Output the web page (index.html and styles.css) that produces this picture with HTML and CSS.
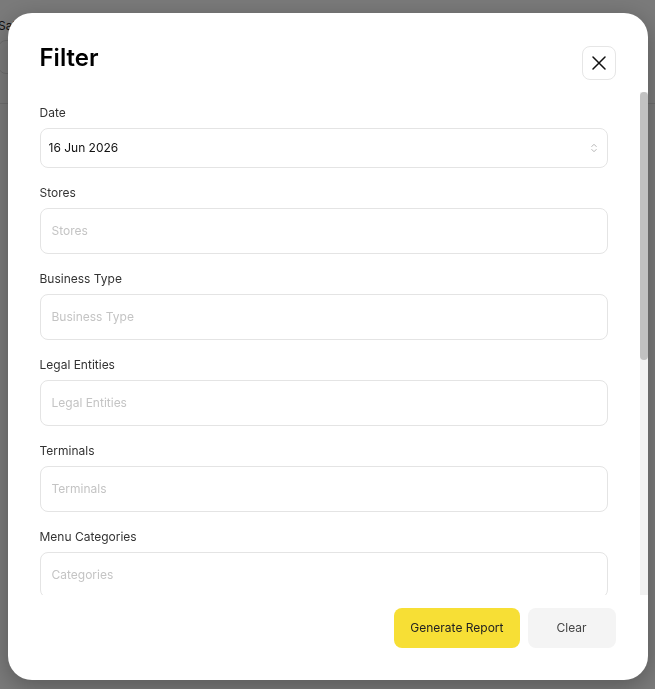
FILE: index.html
```html
<!DOCTYPE html>
<html lang="en">
<head>
<meta charset="utf-8">
<title>Filter</title>
<link rel="stylesheet" href="styles.css">
</head>
<body>
<div class="page">
  <div class="page-head">
    <div class="page-title">Sales Summary</div>
    <div class="page-box"></div>
  </div>
</div>

<div class="overlay">
  <div class="modal">
    <div class="modal-head">
      <h2 class="modal-title">Filter</h2>
      <button class="close-btn" aria-label="Close">
        <svg width="14" height="14" viewBox="0 0 14 14"><path d="M1 1 L13 13 M13 1 L1 13" stroke="#111" stroke-width="1.5" fill="none" stroke-linecap="round"/></svg>
      </button>
    </div>

    <div class="modal-body">
      <div class="scroll-content">
        <div class="field">
          <label class="label">Date</label>
          <div class="control control-date">
            <span class="value">16 Jun 2026</span>
            <svg class="chev" width="8" height="12" viewBox="0 0 8 12"><path d="M1.5 4.8 L4 2.3 L6.5 4.8 M1.5 7.2 L4 9.7 L6.5 7.2" stroke="#b5b5b5" stroke-width="1" fill="none"/></svg>
          </div>
        </div>
        <div class="field">
          <label class="label">Stores</label>
          <input class="control" placeholder="Stores">
        </div>
        <div class="field">
          <label class="label">Business Type</label>
          <input class="control" placeholder="Business Type">
        </div>
        <div class="field">
          <label class="label">Legal Entities</label>
          <input class="control" placeholder="Legal Entities">
        </div>
        <div class="field">
          <label class="label">Terminals</label>
          <input class="control" placeholder="Terminals">
        </div>
        <div class="field">
          <label class="label">Menu Categories</label>
          <input class="control" placeholder="Categories">
        </div>
        <div class="field">
          <label class="label">Menu Items</label>
          <input class="control" placeholder="Menu Items">
        </div>
      </div>
      <div class="scrollbar"><div class="thumb"></div></div>
    </div>

    <div class="modal-foot">
      <button class="btn btn-primary">Generate Report</button>
      <button class="btn btn-secondary">Clear</button>
    </div>
  </div>
</div>
</body>
</html>
```

FILE: styles.css
```css
* { box-sizing: border-box; }

html, body {
  margin: 0;
  padding: 0;
  height: 100%;
}

body {
  font-family: Inter, "Noto Sans", "Liberation Sans", sans-serif;
  background: #f4f4f4;
  color: #222;
  overflow: hidden;
}

.page {
  height: 100%;
}

.page-head {
  height: 104px;
  border-bottom: 1px solid #dcdcdc;
  padding: 18px 0 0 0;
  margin-left: -2px;
}

.page-title {
  font-size: 12px;
  line-height: 16px;
  color: #222;
}

.page-box {
  margin-top: 6px;
  width: 200px;
  height: 34px;
  border: 1px solid #d8d8d8;
  border-radius: 8px;
  background: #f4f4f4;
}

.overlay {
  position: fixed;
  inset: 0;
  background: rgba(0, 0, 0, 0.5);
  display: flex;
  align-items: flex-start;
  justify-content: center;
  padding-top: 13px;
}

.modal {
  width: 640px;
  height: 667px;
  background: #fff;
  border-radius: 24px;
  box-shadow: 0 6px 24px rgba(0, 0, 0, 0.28);
  display: flex;
  flex-direction: column;
  overflow: hidden;
}

.modal-head {
  display: flex;
  justify-content: space-between;
  align-items: flex-start;
  padding: 29px 32px 0 32px;
  height: 66px;
  flex: none;
}

.modal-title {
  margin: 0;
  font-size: 24px;
  line-height: 32px;
  font-weight: 600;
  color: #000;
}

.close-btn {
  margin-top: 4px;
  width: 34px;
  height: 34px;
  border: 1px solid #e6e6e6;
  border-radius: 8px;
  background: #fff;
  display: flex;
  align-items: center;
  justify-content: center;
  padding: 0;
  cursor: pointer;
}

.modal-body {
  margin-top: 13px;
  height: 503px;
  flex: none;
  display: flex;
}

.scroll-content {
  flex: 1;
  overflow: hidden;
  padding: 13px 32px 0 32px;
}

.scrollbar {
  width: 8px;
  flex: none;
  background: #f1f1f1;
}

.thumb {
  height: 268px;
  background: #c1c1c1;
  border-radius: 4px;
}

.field {
  display: flex;
  flex-direction: column;
  margin-bottom: 17px;
}

.label {
  font-size: 12px;
  line-height: 16px;
  color: #333;
  margin-bottom: 7px;
}

.control {
  height: 46px;
  width: 100%;
  border: 1px solid #e4e4e4;
  border-radius: 8px;
  background: #fff;
  padding: 0 11px 1px 11px;
  font-family: inherit;
  font-size: 12px;
  color: #222;
  outline: none;
  flex: none;
}

.control::placeholder {
  color: #c4c4c4;
}

.control-date {
  height: 40px;
  display: flex;
  align-items: center;
  justify-content: space-between;
  padding: 0 9px 1px 8px;
}

.value {
  font-size: 12px;
  color: #111;
}

.chev {
  display: block;
}

.modal-foot {
  flex: none;
  display: flex;
  justify-content: flex-end;
  gap: 8px;
  padding: 13px 32px 0 32px;
}

.btn {
  height: 40px;
  border: none;
  border-radius: 8px;
  padding: 0 16px 1px 16px;
  font-family: inherit;
  font-size: 12px;
  cursor: pointer;
}

.btn-primary {
  background: #f7df35;
  color: #222;
}

.btn-secondary {
  background: #f4f4f4;
  color: #444;
  min-width: 88px;
}
```
